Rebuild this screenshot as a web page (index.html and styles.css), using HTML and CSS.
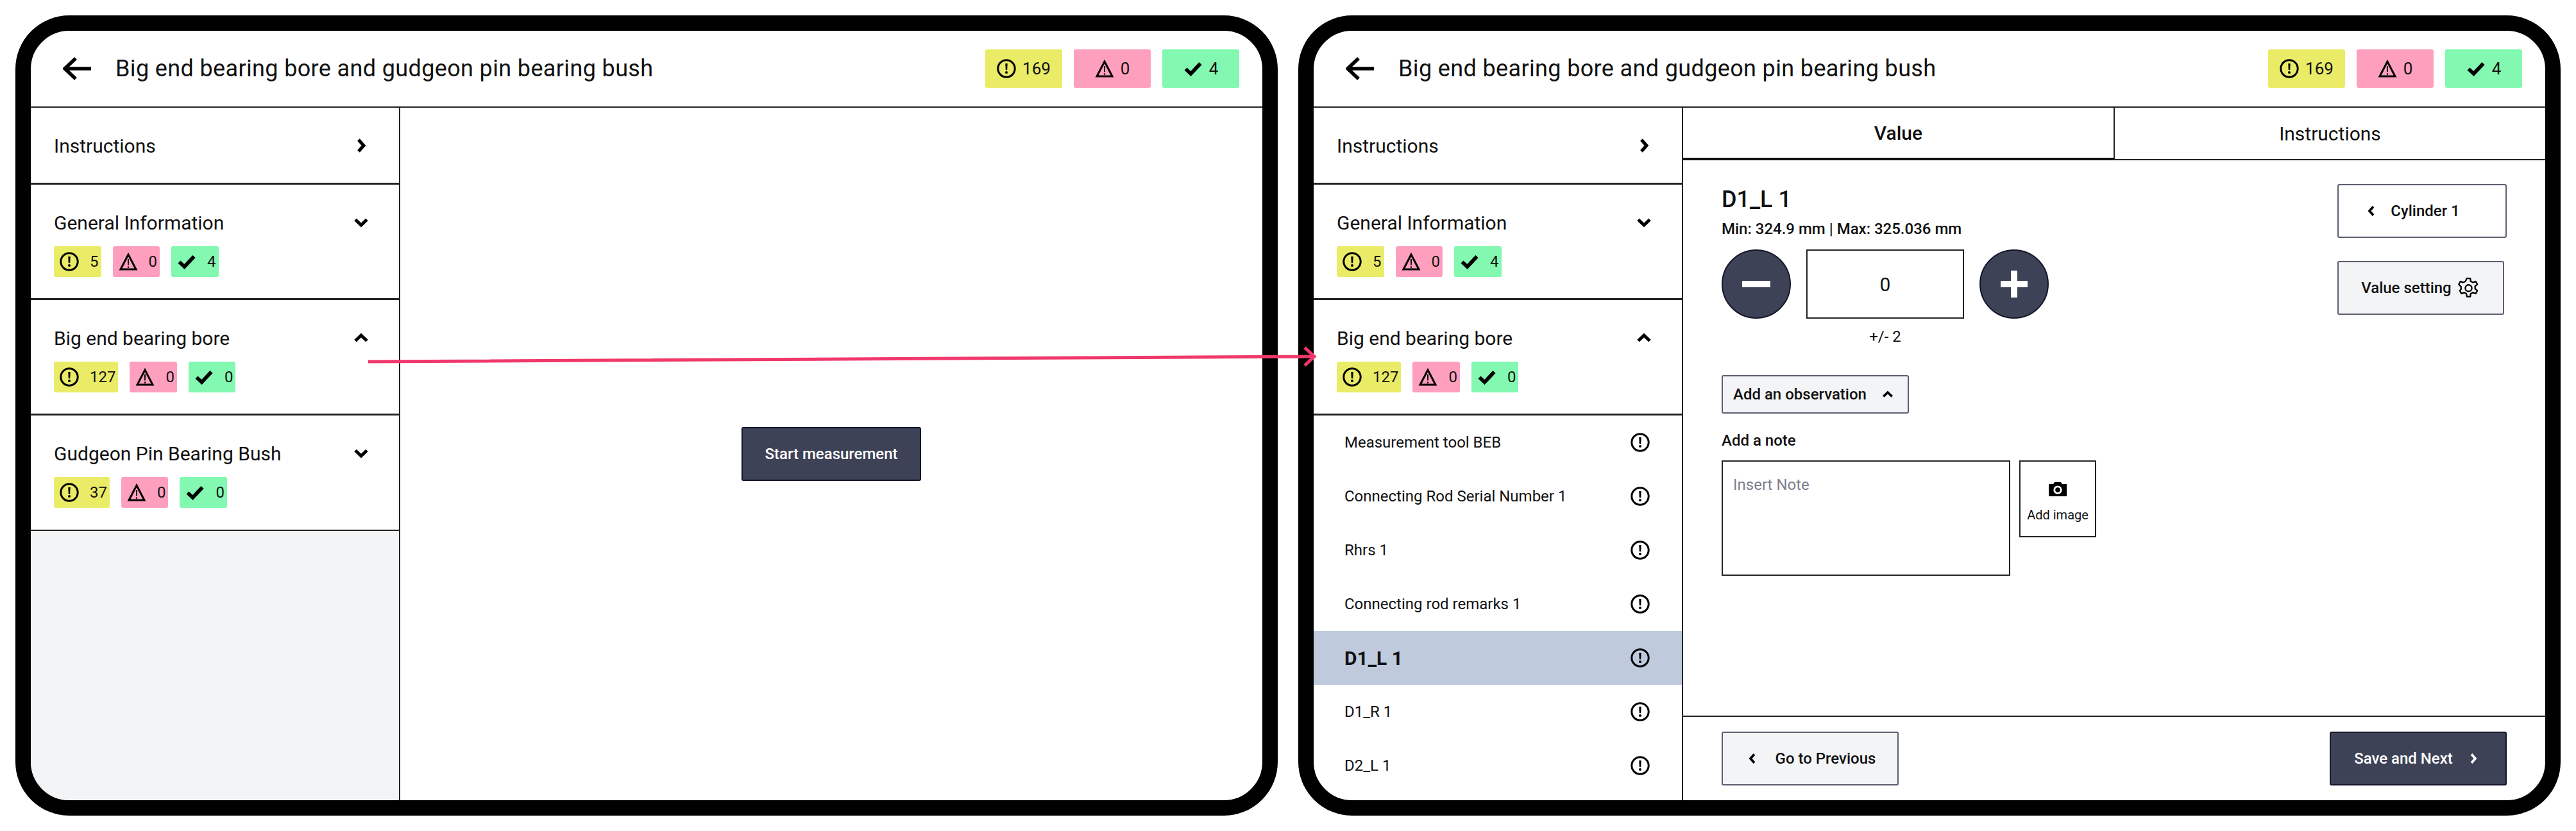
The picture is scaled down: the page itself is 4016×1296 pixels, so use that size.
FILE: index.html
```html
<!DOCTYPE html>
<html lang="en">
<head>
  <meta charset="UTF-8" />
  <title>Big end bearing bore measurement</title>
  <link rel="stylesheet" href="styles.css">
</head>
<body>
  <svg class="sprite" width="0" height="0">
    <symbol id="i-alert" viewBox="0 0 30 30">
      <circle cx="15" cy="15" r="13.2" fill="none" stroke="currentColor" stroke-width="3"/>
      <path d="M13.3 7h3.4l-.5 10.2h-2.4z" fill="currentColor"/>
      <circle cx="15" cy="21" r="2" fill="currentColor"/>
    </symbol>
    <symbol id="i-warn" viewBox="0 0 30 30">
      <path d="M15 4L3 27h24z" fill="none" stroke="currentColor" stroke-width="3" stroke-linejoin="miter"/>
      <path d="M13.9 11h2.2l-.3 9.500h-1.600z" fill="currentColor"/>
      <rect x="13.900" y="22.500" width="2.200" height="2.200" fill="currentColor"/>
    </symbol>
    <symbol id="i-check" viewBox="0 0 30 30">
      <path d="M3.500 15.500l8 7.500L26.500 7" fill="none" stroke="currentColor" stroke-width="5.800"/>
    </symbol>
    <symbol id="i-right" viewBox="0 0 16 24">
      <path d="M4 3l8 9-8 9" fill="none" stroke="currentColor" stroke-width="5"/>
    </symbol>
    <symbol id="i-left" viewBox="0 0 16 24">
      <path d="M12 3l-8 9 8 9" fill="none" stroke="currentColor" stroke-width="5"/>
    </symbol>
    <symbol id="i-down" viewBox="0 0 24 16">
      <path d="M3 3.500l9 8.500 9-8.500" fill="none" stroke="currentColor" stroke-width="5"/>
    </symbol>
    <symbol id="i-up" viewBox="0 0 24 16">
      <path d="M3 12.500l9-8.500 9 8.500" fill="none" stroke="currentColor" stroke-width="5"/>
    </symbol>
    <symbol id="i-back" viewBox="0 0 44 36">
      <path d="M20 2L3 18l17 16M3 18h41" fill="none" stroke="currentColor" stroke-width="5.500"/>
    </symbol>
  </svg>

  <div class="screens">

    <section class="tablet">
      <header class="topbar">
        <svg class="back-icon"><use href="#i-back"/></svg>
        <h1 class="title">Big end bearing bore and gudgeon pin bearing bush</h1>
        <div class="totals">
          <span class="badge badge-lg yellow"><svg class="ic"><use href="#i-alert"/></svg>169</span>
          <span class="badge badge-lg pink"><svg class="ic"><use href="#i-warn"/></svg>0</span>
          <span class="badge badge-lg green"><svg class="ic"><use href="#i-check"/></svg>4</span>
        </div>
      </header>
      <div class="layout">
        <aside class="sidebar sidebar-empty">
          <div class="group group-plain">
            <div class="group-head">Instructions <svg class="chev-side"><use href="#i-right"/></svg></div>
          </div>
          <div class="group">
            <div class="group-head">General Information <svg class="chev"><use href="#i-down"/></svg></div>
            <div class="badges">
              <span class="badge yellow"><svg class="ic"><use href="#i-alert"/></svg>5</span>
              <span class="badge pink"><svg class="ic"><use href="#i-warn"/></svg>0</span>
              <span class="badge green"><svg class="ic"><use href="#i-check"/></svg>4</span>
            </div>
          </div>
          <div class="group">
            <div class="group-head">Big end bearing bore <svg class="chev"><use href="#i-up"/></svg></div>
            <div class="badges">
              <span class="badge yellow"><svg class="ic"><use href="#i-alert"/></svg>127</span>
              <span class="badge pink"><svg class="ic"><use href="#i-warn"/></svg>0</span>
              <span class="badge green"><svg class="ic"><use href="#i-check"/></svg>0</span>
            </div>
          </div>
          <div class="group">
            <div class="group-head">Gudgeon Pin Bearing Bush <svg class="chev"><use href="#i-down"/></svg></div>
            <div class="badges">
              <span class="badge yellow"><svg class="ic"><use href="#i-alert"/></svg>37</span>
              <span class="badge pink"><svg class="ic"><use href="#i-warn"/></svg>0</span>
              <span class="badge green"><svg class="ic"><use href="#i-check"/></svg>0</span>
            </div>
          </div>
        </aside>
        <main class="start-pane">
          <button class="btn btn-dark btn-start">Start measurement</button>
        </main>
      </div>
    </section>

    <section class="tablet">
      <header class="topbar">
        <svg class="back-icon"><use href="#i-back"/></svg>
        <h1 class="title">Big end bearing bore and gudgeon pin bearing bush</h1>
        <div class="totals">
          <span class="badge badge-lg yellow"><svg class="ic"><use href="#i-alert"/></svg>169</span>
          <span class="badge badge-lg pink"><svg class="ic"><use href="#i-warn"/></svg>0</span>
          <span class="badge badge-lg green"><svg class="ic"><use href="#i-check"/></svg>4</span>
        </div>
      </header>
      <div class="layout">
        <aside class="sidebar">
          <div class="group group-plain">
            <div class="group-head">Instructions <svg class="chev-side"><use href="#i-right"/></svg></div>
          </div>
          <div class="group">
            <div class="group-head">General Information <svg class="chev"><use href="#i-down"/></svg></div>
            <div class="badges">
              <span class="badge yellow"><svg class="ic"><use href="#i-alert"/></svg>5</span>
              <span class="badge pink"><svg class="ic"><use href="#i-warn"/></svg>0</span>
              <span class="badge green"><svg class="ic"><use href="#i-check"/></svg>4</span>
            </div>
          </div>
          <div class="group">
            <div class="group-head">Big end bearing bore <svg class="chev"><use href="#i-up"/></svg></div>
            <div class="badges">
              <span class="badge yellow"><svg class="ic"><use href="#i-alert"/></svg>127</span>
              <span class="badge pink"><svg class="ic"><use href="#i-warn"/></svg>0</span>
              <span class="badge green"><svg class="ic"><use href="#i-check"/></svg>0</span>
            </div>
          </div>
          <ul class="items">
            <li class="item">Measurement tool BEB <svg class="ic"><use href="#i-alert"/></svg></li>
            <li class="item">Connecting Rod Serial Number 1 <svg class="ic"><use href="#i-alert"/></svg></li>
            <li class="item">Rhrs 1 <svg class="ic"><use href="#i-alert"/></svg></li>
            <li class="item">Connecting rod remarks 1 <svg class="ic"><use href="#i-alert"/></svg></li>
            <li class="item item-active">D1_L 1 <svg class="ic"><use href="#i-alert"/></svg></li>
            <li class="item">D1_R 1 <svg class="ic"><use href="#i-alert"/></svg></li>
            <li class="item">D2_L 1 <svg class="ic"><use href="#i-alert"/></svg></li>
          </ul>
        </aside>
        <main class="detail">
          <div class="tabs">
            <div class="tab tab-active">Value</div>
            <div class="tab">Instructions</div>
          </div>
          <div class="form">
            <div class="form-main">
              <h2 class="field-name">D1_L 1</h2>
              <p class="field-range">Min: 324.9 mm | Max: 325.036 mm</p>
              <div class="stepper">
                <button class="round-btn">
                  <svg width="44" height="44" viewBox="0 0 44 44"><rect x="0" y="17" width="44" height="10" fill="#fff"/></svg>
                </button>
                <div class="step-value">0</div>
                <button class="round-btn">
                  <svg width="42" height="42" viewBox="0 0 42 42"><path d="M16 0h10v16h16v10H26v16H16V26H0V16h16z" fill="#fff"/></svg>
                </button>
              </div>
              <div class="tolerance">+/- 2</div>
              <button class="btn btn-light btn-observe">Add an observation <svg class="chev-small"><use href="#i-up"/></svg></button>
              <div class="note-label">Add a note</div>
              <div class="note-row">
                <div class="note-box">Insert Note</div>
                <div class="image-box">
                  <svg width="28" height="22" viewBox="0 0 28 22"><path d="M9 0h10l2 3h7v19H0V3h7z" fill="#000"/><circle cx="14" cy="12" r="6.600" fill="#fff"/><circle cx="14" cy="12" r="3.800" fill="#000"/></svg>
                  <span>Add image</span>
                </div>
              </div>
            </div>
            <div class="form-side">
              <button class="btn btn-white btn-cylinder"><svg class="chev-nav"><use href="#i-left"/></svg> Cylinder 1</button>
              <button class="btn btn-light btn-setting">Value setting
                <svg width="37" height="37" viewBox="0 0 24 24" fill="none" stroke="#000" stroke-width="1.500" stroke-linejoin="round"><path d="M10.300 2h3.400l.5 3 2.200 1.200 2.800-1.100 1.700 3-2.300 1.900v2.500l2.300 1.900-1.700 3-2.800-1.100-2.200 1.200-.5 3h-3.400l-.5-3-2.200-1.200-2.800 1.100-1.700-3L4.400 13v-2.500L2.100 8.100l1.700-3 2.800 1.100 2.200-1.200z"/><circle cx="12" cy="11.900" r="3.300"/></svg>
              </button>
            </div>
          </div>
          <footer class="actions">
            <button class="btn btn-light btn-nav btn-prev"><svg class="chev-nav"><use href="#i-left"/></svg> Go to Previous</button>
            <button class="btn btn-dark btn-nav btn-next">Save and Next <svg class="chev-nav"><use href="#i-right"/></svg></button>
          </footer>
        </main>
      </div>
    </section>

    <!-- link between the two screens -->
    <svg class="flow-arrow" width="4016" height="1296" viewBox="0 0 4016 1296">
      <path d="M574 564L2048 556M2034 542l15 14-15 14" fill="none" stroke="#f0386b" stroke-width="5"/>
    </svg>
  </div>
</body>
</html>
```

FILE: styles.css
```css
* {
  box-sizing: border-box;
}

body {
  margin: 0;
  background: #fff;
  color: #111;
  font-family: Roboto, "Liberation Sans", sans-serif;
}

.sprite {
  position: absolute;
}

.screens {
  position: relative;
  display: flex;
  gap: 32px;
  width: 4016px;
  height: 1296px;
  padding: 24px;
}

.tablet {
  display: flex;
  flex-direction: column;
  width: 1968px;
  height: 1248px;
  border: 24px solid #000;
  border-radius: 84px;
  overflow: hidden;
  background: #fff;
}

.flow-arrow {
  position: absolute;
  top: 0;
  left: 0;
}

/* top bar */
.topbar {
  display: flex;
  align-items: center;
  flex: 0 0 120px;
  padding: 0 36px 0 50px;
  border-bottom: 2px solid #222;
}

.back-icon {
  width: 44px;
  height: 36px;
  margin-right: 38px;
  color: #000;
}

.title {
  flex: 1;
  margin: 0;
  font-size: 36px;
  font-weight: 400;
  letter-spacing: 0.36px;
}

.totals {
  display: flex;
  gap: 18px;
}

/* badges */
.badge {
  display: flex;
  align-items: center;
  gap: 17px;
  height: 48px;
  padding: 0 4px 0 9px;
  border-radius: 3px;
  font-size: 24px;
}

.badge-lg {
  justify-content: center;
  gap: 10px;
  width: 120px;
  height: 60px;
  padding: 0;
  font-size: 26px;
}

.yellow {
  background: #eaec67;
}

.pink {
  background: #ff9fbe;
}

.green {
  background: #82f8b0;
}

.ic {
  width: 30px;
  height: 30px;
  color: #000;
  flex: none;
}

/* sidebar */
.layout {
  display: flex;
  flex: 1;
  min-height: 0;
}

.sidebar {
  flex: 0 0 576px;
  border-right: 2px solid #222;
  overflow: hidden;
}

.sidebar-empty {
  background: #f3f4f6;
}

.group {
  height: 180px;
  padding: 35px 36px 0;
  border-bottom: 3px solid #222;
  background: #fff;
}

.group:nth-child(4) {
  border-bottom-width: 2px;
}

.group-plain {
  height: 120px;
}

.group-head {
  display: flex;
  align-items: center;
  justify-content: space-between;
  height: 48px;
  padding-right: 11px;
  font-size: 30px;
}

.chev {
  width: 24px;
  height: 16px;
  color: #000;
}

.chev-side {
  width: 16px;
  height: 24px;
  margin-right: 4px;
  color: #000;
}

.badges {
  display: flex;
  gap: 18px;
  margin-top: 13px;
}

.items {
  margin: 0;
  padding: 0;
  list-style: none;
}

.item {
  display: flex;
  align-items: center;
  justify-content: space-between;
  height: 84px;
  padding: 0 50px 0 48px;
  font-size: 24px;
}

.item-active {
  background: #c0cadd;
  font-size: 30px;
  font-weight: 700;
}

/* start screen */
.start-pane {
  display: flex;
  align-items: center;
  justify-content: center;
  flex: 1;
}

/* buttons */
.btn {
  display: flex;
  align-items: center;
  justify-content: center;
  height: 84px;
  border-radius: 3px;
  font-family: inherit;
  font-size: 24px;
  font-weight: 500;
  color: #111;
}

.btn-dark {
  background: #3e4256;
  border: 2px solid #14162a;
  color: #fff;
}

.btn-light {
  background: #f3f4f6;
  border: 2px solid #5a5e70;
}

.btn-white {
  background: #fff;
  border: 2px solid #5a5e70;
}

.btn-start {
  width: 280px;
}

.btn-nav {
  width: 276px;
}

.btn-prev {
  gap: 30px;
  padding: 0 0 0 6px;
}

.btn-next {
  gap: 26px;
  padding: 0 8px 0 0;
}

.chev-nav {
  width: 12px;
  height: 18px;
  color: #000;
}

.btn-dark .chev-nav {
  color: #fff;
}

/* detail pane */
.detail {
  display: flex;
  flex-direction: column;
  flex: 1;
  min-width: 0;
}

.tabs {
  display: flex;
  flex: 0 0 82px;
}

.tab {
  display: flex;
  align-items: center;
  justify-content: center;
  flex: 1;
  border-bottom: 2px solid #222;
  font-size: 30px;
}

.tab-active {
  border-right: 2px solid #222;
  border-bottom: 4px solid #111;
  font-weight: 500;
}

.form {
  display: flex;
  justify-content: space-between;
  flex: 1;
  padding: 37px 60px 0;
  border-bottom: 2px solid #222;
}

.field-name {
  margin: 0;
  font-size: 36px;
  font-weight: 500;
  line-height: 48px;
}

.field-range {
  margin: 6px 0 0;
  font-size: 24px;
  font-weight: 500;
  line-height: 32px;
}

.stepper {
  display: flex;
  gap: 24px;
  margin-top: 16px;
}

.round-btn {
  display: flex;
  align-items: center;
  justify-content: center;
  width: 108px;
  height: 108px;
  padding: 0;
  border: 2px solid #14162a;
  border-radius: 50%;
  background: #3e4256;
}

.step-value {
  display: flex;
  align-items: center;
  justify-content: center;
  width: 246px;
  height: 108px;
  border: 2px solid #222;
  font-size: 30px;
}

.tolerance {
  width: 246px;
  margin: 12px 0 0 132px;
  font-size: 24px;
  line-height: 32px;
  text-align: center;
}

.btn-observe {
  justify-content: flex-start;
  gap: 24px;
  width: 292px;
  height: 60px;
  margin-top: 44px;
  padding: 0 0 0 16px;
}

.chev-small {
  width: 18px;
  height: 12px;
  color: #000;
}

.note-label {
  margin-top: 26px;
  font-size: 24px;
  font-weight: 500;
  line-height: 32px;
}

.note-row {
  display: flex;
  align-items: flex-start;
  gap: 14px;
  margin-top: 15px;
}

.note-box {
  width: 450px;
  height: 180px;
  padding: 22px 16px;
  border: 2px solid #222;
  color: #7b7f8e;
  font-size: 24px;
}

.image-box {
  display: flex;
  flex-direction: column;
  align-items: center;
  gap: 17px;
  width: 120px;
  height: 120px;
  padding-top: 32px;
  border: 2px solid #222;
  font-size: 20px;
}

.form-side {
  display: flex;
  flex-direction: column;
  gap: 36px;
}

.btn-cylinder {
  gap: 24px;
  width: 264px;
  padding: 0 26px 0 0;
}

.btn-setting {
  gap: 8px;
  width: 260px;
}

.actions {
  display: flex;
  align-items: center;
  justify-content: space-between;
  flex: 0 0 130px;
  padding: 0 60px;
}
```
